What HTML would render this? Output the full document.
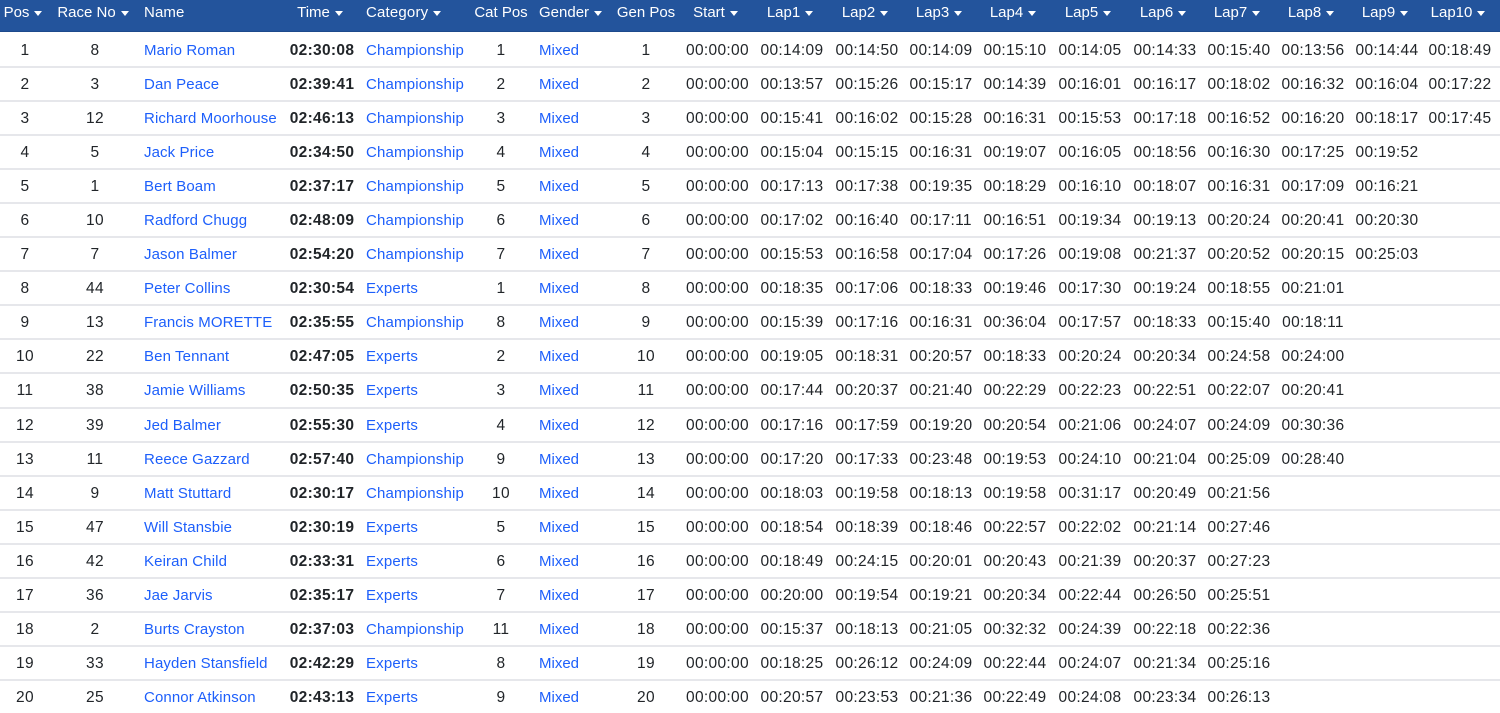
<!DOCTYPE html>
<html><head><meta charset="utf-8"><title>Results</title>
<style>
html,body{margin:0;padding:0;background:#fff;width:1500px;height:713px;overflow:hidden}
table{border-collapse:separate;border-spacing:0;table-layout:fixed;width:1500px;font-family:"Liberation Sans",Arial,sans-serif;font-size:15px;color:#212529}
th{height:34px;background:#23549c;color:#fff;font-weight:400;padding:0 0 8px;box-sizing:border-box;border-bottom:2px solid #fff;box-shadow:inset 0 -1px 0 #1d4a8c;text-align:center;white-space:nowrap;overflow:visible;letter-spacing:0}
td{height:34.05px;box-sizing:border-box;padding:2px 0 0;text-align:center;border-bottom:2px solid #e6e7eb;white-space:nowrap;overflow:visible;font-size:15.5px;letter-spacing:.32px}
td:nth-child(3),th:nth-child(3){text-align:left;padding-left:4px;font-size:15px;letter-spacing:.11px}
td:nth-child(5),th:nth-child(5){text-align:left;padding-left:7px;font-size:15px;letter-spacing:.18px}
td:nth-child(7),th:nth-child(7){text-align:left;padding-left:9px;font-size:15px;letter-spacing:0}
td:nth-child(3),td:nth-child(5),td:nth-child(7){padding-top:1px}
td:nth-child(4){font-weight:700}
td:nth-child(19),th:nth-child(19){padding-right:4px}
a{color:#1d5ffb;text-decoration:none}
i{display:inline-block;width:0;height:0;border-left:4.5px solid transparent;border-right:4.5px solid transparent;border-top:5px solid #fff;margin-left:5px;margin-right:4px;vertical-align:1px}
</style></head><body>
<table>
<colgroup><col style="width:50px"><col style="width:90px"><col style="width:145px"><col style="width:74px"><col style="width:113px"><col style="width:58px"><col style="width:81px"><col style="width:70px"><col style="width:73px"><col style="width:76px"><col style="width:74px"><col style="width:74px"><col style="width:74px"><col style="width:76px"><col style="width:74px"><col style="width:74px"><col style="width:74px"><col style="width:74px"><col style="width:76px"></colgroup>
<thead><tr><th>Pos<i></i></th><th>Race No<i></i></th><th>Name</th><th>Time<i></i></th><th>Category<i></i></th><th>Cat Pos</th><th>Gender<i></i></th><th>Gen Pos</th><th>Start<i></i></th><th>Lap1<i></i></th><th>Lap2<i></i></th><th>Lap3<i></i></th><th>Lap4<i></i></th><th>Lap5<i></i></th><th>Lap6<i></i></th><th>Lap7<i></i></th><th>Lap8<i></i></th><th>Lap9<i></i></th><th>Lap10<i></i></th></tr></thead>
<tbody>
<tr><td>1</td><td>8</td><td><a>Mario Roman</a></td><td>02:30:08</td><td><a>Championship</a></td><td>1</td><td><a>Mixed</a></td><td>1</td><td>00:00:00</td><td>00:14:09</td><td>00:14:50</td><td>00:14:09</td><td>00:15:10</td><td>00:14:05</td><td>00:14:33</td><td>00:15:40</td><td>00:13:56</td><td>00:14:44</td><td>00:18:49</td></tr>
<tr><td>2</td><td>3</td><td><a>Dan Peace</a></td><td>02:39:41</td><td><a>Championship</a></td><td>2</td><td><a>Mixed</a></td><td>2</td><td>00:00:00</td><td>00:13:57</td><td>00:15:26</td><td>00:15:17</td><td>00:14:39</td><td>00:16:01</td><td>00:16:17</td><td>00:18:02</td><td>00:16:32</td><td>00:16:04</td><td>00:17:22</td></tr>
<tr><td>3</td><td>12</td><td><a>Richard Moorhouse</a></td><td>02:46:13</td><td><a>Championship</a></td><td>3</td><td><a>Mixed</a></td><td>3</td><td>00:00:00</td><td>00:15:41</td><td>00:16:02</td><td>00:15:28</td><td>00:16:31</td><td>00:15:53</td><td>00:17:18</td><td>00:16:52</td><td>00:16:20</td><td>00:18:17</td><td>00:17:45</td></tr>
<tr><td>4</td><td>5</td><td><a>Jack Price</a></td><td>02:34:50</td><td><a>Championship</a></td><td>4</td><td><a>Mixed</a></td><td>4</td><td>00:00:00</td><td>00:15:04</td><td>00:15:15</td><td>00:16:31</td><td>00:19:07</td><td>00:16:05</td><td>00:18:56</td><td>00:16:30</td><td>00:17:25</td><td>00:19:52</td><td></td></tr>
<tr><td>5</td><td>1</td><td><a>Bert Boam</a></td><td>02:37:17</td><td><a>Championship</a></td><td>5</td><td><a>Mixed</a></td><td>5</td><td>00:00:00</td><td>00:17:13</td><td>00:17:38</td><td>00:19:35</td><td>00:18:29</td><td>00:16:10</td><td>00:18:07</td><td>00:16:31</td><td>00:17:09</td><td>00:16:21</td><td></td></tr>
<tr><td>6</td><td>10</td><td><a>Radford Chugg</a></td><td>02:48:09</td><td><a>Championship</a></td><td>6</td><td><a>Mixed</a></td><td>6</td><td>00:00:00</td><td>00:17:02</td><td>00:16:40</td><td>00:17:11</td><td>00:16:51</td><td>00:19:34</td><td>00:19:13</td><td>00:20:24</td><td>00:20:41</td><td>00:20:30</td><td></td></tr>
<tr><td>7</td><td>7</td><td><a>Jason Balmer</a></td><td>02:54:20</td><td><a>Championship</a></td><td>7</td><td><a>Mixed</a></td><td>7</td><td>00:00:00</td><td>00:15:53</td><td>00:16:58</td><td>00:17:04</td><td>00:17:26</td><td>00:19:08</td><td>00:21:37</td><td>00:20:52</td><td>00:20:15</td><td>00:25:03</td><td></td></tr>
<tr><td>8</td><td>44</td><td><a>Peter Collins</a></td><td>02:30:54</td><td><a>Experts</a></td><td>1</td><td><a>Mixed</a></td><td>8</td><td>00:00:00</td><td>00:18:35</td><td>00:17:06</td><td>00:18:33</td><td>00:19:46</td><td>00:17:30</td><td>00:19:24</td><td>00:18:55</td><td>00:21:01</td><td></td><td></td></tr>
<tr><td>9</td><td>13</td><td><a>Francis MORETTE</a></td><td>02:35:55</td><td><a>Championship</a></td><td>8</td><td><a>Mixed</a></td><td>9</td><td>00:00:00</td><td>00:15:39</td><td>00:17:16</td><td>00:16:31</td><td>00:36:04</td><td>00:17:57</td><td>00:18:33</td><td>00:15:40</td><td>00:18:11</td><td></td><td></td></tr>
<tr><td>10</td><td>22</td><td><a>Ben Tennant</a></td><td>02:47:05</td><td><a>Experts</a></td><td>2</td><td><a>Mixed</a></td><td>10</td><td>00:00:00</td><td>00:19:05</td><td>00:18:31</td><td>00:20:57</td><td>00:18:33</td><td>00:20:24</td><td>00:20:34</td><td>00:24:58</td><td>00:24:00</td><td></td><td></td></tr>
<tr><td>11</td><td>38</td><td><a>Jamie Williams</a></td><td>02:50:35</td><td><a>Experts</a></td><td>3</td><td><a>Mixed</a></td><td>11</td><td>00:00:00</td><td>00:17:44</td><td>00:20:37</td><td>00:21:40</td><td>00:22:29</td><td>00:22:23</td><td>00:22:51</td><td>00:22:07</td><td>00:20:41</td><td></td><td></td></tr>
<tr><td>12</td><td>39</td><td><a>Jed Balmer</a></td><td>02:55:30</td><td><a>Experts</a></td><td>4</td><td><a>Mixed</a></td><td>12</td><td>00:00:00</td><td>00:17:16</td><td>00:17:59</td><td>00:19:20</td><td>00:20:54</td><td>00:21:06</td><td>00:24:07</td><td>00:24:09</td><td>00:30:36</td><td></td><td></td></tr>
<tr><td>13</td><td>11</td><td><a>Reece Gazzard</a></td><td>02:57:40</td><td><a>Championship</a></td><td>9</td><td><a>Mixed</a></td><td>13</td><td>00:00:00</td><td>00:17:20</td><td>00:17:33</td><td>00:23:48</td><td>00:19:53</td><td>00:24:10</td><td>00:21:04</td><td>00:25:09</td><td>00:28:40</td><td></td><td></td></tr>
<tr><td>14</td><td>9</td><td><a>Matt Stuttard</a></td><td>02:30:17</td><td><a>Championship</a></td><td>10</td><td><a>Mixed</a></td><td>14</td><td>00:00:00</td><td>00:18:03</td><td>00:19:58</td><td>00:18:13</td><td>00:19:58</td><td>00:31:17</td><td>00:20:49</td><td>00:21:56</td><td></td><td></td><td></td></tr>
<tr><td>15</td><td>47</td><td><a>Will Stansbie</a></td><td>02:30:19</td><td><a>Experts</a></td><td>5</td><td><a>Mixed</a></td><td>15</td><td>00:00:00</td><td>00:18:54</td><td>00:18:39</td><td>00:18:46</td><td>00:22:57</td><td>00:22:02</td><td>00:21:14</td><td>00:27:46</td><td></td><td></td><td></td></tr>
<tr><td>16</td><td>42</td><td><a>Keiran Child</a></td><td>02:33:31</td><td><a>Experts</a></td><td>6</td><td><a>Mixed</a></td><td>16</td><td>00:00:00</td><td>00:18:49</td><td>00:24:15</td><td>00:20:01</td><td>00:20:43</td><td>00:21:39</td><td>00:20:37</td><td>00:27:23</td><td></td><td></td><td></td></tr>
<tr><td>17</td><td>36</td><td><a>Jae Jarvis</a></td><td>02:35:17</td><td><a>Experts</a></td><td>7</td><td><a>Mixed</a></td><td>17</td><td>00:00:00</td><td>00:20:00</td><td>00:19:54</td><td>00:19:21</td><td>00:20:34</td><td>00:22:44</td><td>00:26:50</td><td>00:25:51</td><td></td><td></td><td></td></tr>
<tr><td>18</td><td>2</td><td><a>Burts Crayston</a></td><td>02:37:03</td><td><a>Championship</a></td><td>11</td><td><a>Mixed</a></td><td>18</td><td>00:00:00</td><td>00:15:37</td><td>00:18:13</td><td>00:21:05</td><td>00:32:32</td><td>00:24:39</td><td>00:22:18</td><td>00:22:36</td><td></td><td></td><td></td></tr>
<tr><td>19</td><td>33</td><td><a>Hayden Stansfield</a></td><td>02:42:29</td><td><a>Experts</a></td><td>8</td><td><a>Mixed</a></td><td>19</td><td>00:00:00</td><td>00:18:25</td><td>00:26:12</td><td>00:24:09</td><td>00:22:44</td><td>00:24:07</td><td>00:21:34</td><td>00:25:16</td><td></td><td></td><td></td></tr>
<tr><td>20</td><td>25</td><td><a>Connor Atkinson</a></td><td>02:43:13</td><td><a>Experts</a></td><td>9</td><td><a>Mixed</a></td><td>20</td><td>00:00:00</td><td>00:20:57</td><td>00:23:53</td><td>00:21:36</td><td>00:22:49</td><td>00:24:08</td><td>00:23:34</td><td>00:26:13</td><td></td><td></td><td></td></tr>
</tbody></table>
</body></html>
